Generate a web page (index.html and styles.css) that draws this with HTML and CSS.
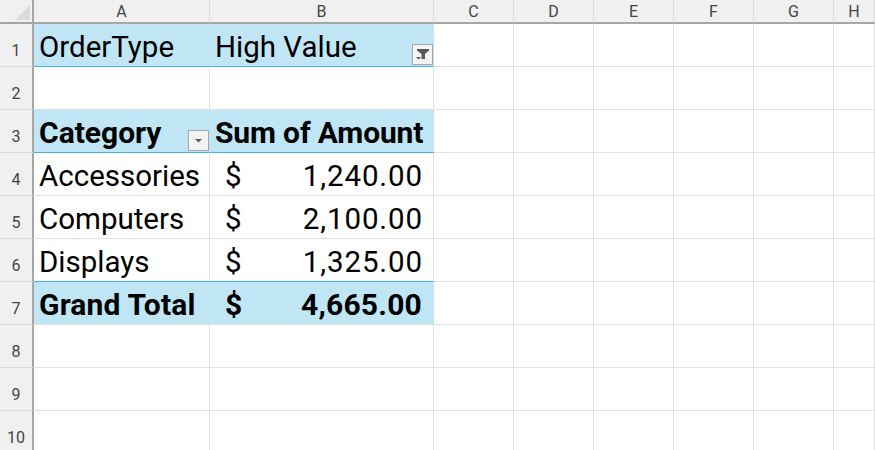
FILE: index.html
```html
<!DOCTYPE html>
<html lang="en">
<head>
    <meta charset="UTF-8">
    <meta name="viewport" content="width=device-width, initial-scale=1.0">
    <title>Pivot Table</title>
    <link rel="stylesheet" href="styles.css">
</head>
<body>
    <div class="sheet">
        <!-- Column headers -->
        <div class="corner"><span class="corner-mark"></span></div>
        <div class="col-head">A</div>
        <div class="col-head">B</div>
        <div class="col-head">C</div>
        <div class="col-head">D</div>
        <div class="col-head">E</div>
        <div class="col-head">F</div>
        <div class="col-head">G</div>
        <div class="col-head">H</div>

        <!-- Row 1 -->
        <div class="row-head">1</div>
        <div class="cell pivot line-bottom no-right">OrderType</div>
        <div class="cell pivot line-bottom no-right">High Value
            <span class="filter-btn">
                <svg width="17" height="15" viewBox="0 0 17 15">
                    <path d="M3 2h12v1.500l-4 3.500v5h-3.500v-5l-4.500-3.500z" fill="#595959"/>
                    <path d="M2 10h5l-2.500 2.500z" fill="#595959"/>
                </svg>
            </span>
        </div>
        <div class="cell"></div><div class="cell"></div><div class="cell"></div><div class="cell"></div><div class="cell"></div><div class="cell"></div>

        <!-- Row 2 -->
        <div class="row-head">2</div>
        <div class="cell"></div><div class="cell"></div><div class="cell"></div><div class="cell"></div><div class="cell"></div><div class="cell"></div><div class="cell"></div><div class="cell"></div>

        <!-- Row 3 -->
        <div class="row-head">3</div>
        <div class="cell pivot bold line-bottom no-right">Category
            <span class="filter-btn">
                <svg width="17" height="15" viewBox="0 0 17 15">
                    <path d="M5 6h7l-3.500 3.500z" fill="#595959"/>
                </svg>
            </span>
        </div>
        <div class="cell pivot bold line-bottom no-right"><span class="tight">Sum of Amount</span></div>
        <div class="cell"></div><div class="cell"></div><div class="cell"></div><div class="cell"></div><div class="cell"></div><div class="cell"></div>

        <!-- Row 4 -->
        <div class="row-head">4</div>
        <div class="cell">Accessories</div>
        <div class="cell money"><span>$</span><span class="amount">1,240.00</span></div>
        <div class="cell"></div><div class="cell"></div><div class="cell"></div><div class="cell"></div><div class="cell"></div><div class="cell"></div>

        <!-- Row 5 -->
        <div class="row-head">5</div>
        <div class="cell">Computers</div>
        <div class="cell money"><span>$</span><span class="amount">2,100.00</span></div>
        <div class="cell"></div><div class="cell"></div><div class="cell"></div><div class="cell"></div><div class="cell"></div><div class="cell"></div>

        <!-- Row 6 -->
        <div class="row-head">6</div>
        <div class="cell line-bottom">Displays</div>
        <div class="cell money line-bottom"><span>$</span><span class="amount">1,325.00</span></div>
        <div class="cell"></div><div class="cell"></div><div class="cell"></div><div class="cell"></div><div class="cell"></div><div class="cell"></div>

        <!-- Row 7 -->
        <div class="row-head">7</div>
        <div class="cell pivot bold no-right"><span class="wide">Grand Total</span></div>
        <div class="cell pivot bold money no-right"><span>$</span><span class="amount">4,665.00</span></div>
        <div class="cell"></div><div class="cell"></div><div class="cell"></div><div class="cell"></div><div class="cell"></div><div class="cell"></div>

        <!-- Empty rows -->
        <div class="row-head">8</div>
        <div class="cell"></div><div class="cell"></div><div class="cell"></div><div class="cell"></div><div class="cell"></div><div class="cell"></div><div class="cell"></div><div class="cell"></div>
        <div class="row-head">9</div>
        <div class="cell"></div><div class="cell"></div><div class="cell"></div><div class="cell"></div><div class="cell"></div><div class="cell"></div><div class="cell"></div><div class="cell"></div>
        <div class="row-head">10</div>
        <div class="cell"></div><div class="cell"></div><div class="cell"></div><div class="cell"></div><div class="cell"></div><div class="cell"></div><div class="cell"></div><div class="cell"></div>
    </div>
</body>
</html>
```

FILE: styles.css
```css
html, body {
    margin: 0;
    padding: 0;
    height: 450px;
    overflow: hidden;
    background-color: #fff;
}

.sheet {
    display: grid;
    grid-template-columns: 34px 176px 224px 80px 80px 80px 80px 80px 41px;
    grid-template-rows: 24px repeat(10, 43px);
    width: 875px;
    font-family: Roboto, Arial, sans-serif;
    color: #000;
}

/* Headers */
.corner {
    background-color: #f0f0f0;
    border-right: 2px solid #a6a6a6;
    border-bottom: 2px solid #a6a6a6;
    box-sizing: border-box;
    position: relative;
}

.corner-mark {
    position: absolute;
    right: 2px;
    bottom: 2px;
    width: 0;
    height: 0;
    border-left: 15px solid transparent;
    border-bottom: 15px solid #dcdcdc;
}

.col-head {
    background-color: #f0f0f0;
    border-right: 1px solid #dadada;
    border-bottom: 2px solid #a6a6a6;
    box-sizing: border-box;
    color: #444;
    font-size: 16px;
    line-height: 23px;
    text-align: center;
}

.row-head {
    background-color: #f0f0f0;
    border-right: 2px solid #a6a6a6;
    border-bottom: 1px solid #dadada;
    box-sizing: border-box;
    color: #444;
    font-size: 16px;
    line-height: 18px;
    padding-top: 18px;
    text-align: center;
}

/* Cells */
.cell {
    position: relative;
    display: flex;
    align-items: flex-end;
    box-sizing: border-box;
    border-right: 1px solid #e1e1e1;
    border-bottom: 1px solid #e1e1e1;
    padding: 0 11px 0 5px;
    font-size: 29.5px;
    line-height: 38px;
    white-space: nowrap;
}

.pivot {
    background-color: #c0e6f5;
}

.no-right {
    border-right-color: #c0e6f5;
}

.bold {
    font-size: 30px;
    font-weight: 700;
}

.line-bottom {
    border-bottom-color: #45b0e1;
}

.money {
    justify-content: space-between;
    padding-left: 15px;
}

.amount {
    letter-spacing: 0.9px;
    margin-right: -1px;
}

.bold .amount {
    letter-spacing: 0.2px;
    margin-right: 0;
}

.tight {
    letter-spacing: -0.15px;
}

.wide {
    letter-spacing: 0.2px;
}

.filter-btn {
    position: absolute;
    right: 0;
    bottom: 1px;
    width: 21px;
    height: 21px;
    box-sizing: border-box;
    display: flex;
    align-items: center;
    justify-content: center;
    background-color: #f4f4f4;
    border: 1px solid #a6a6a6;
}
```
